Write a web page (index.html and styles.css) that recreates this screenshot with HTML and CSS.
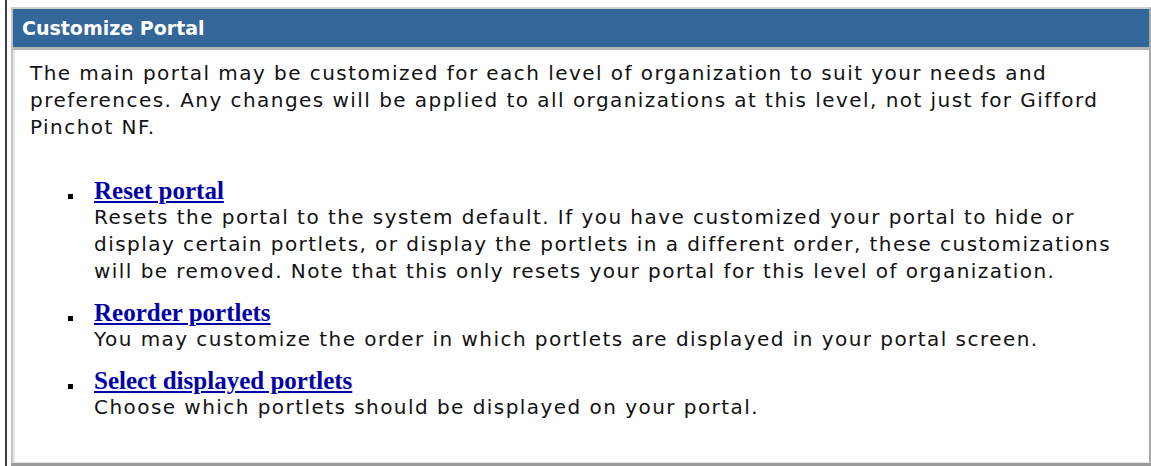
FILE: index.html
```html
<!DOCTYPE html>
<html lang="en">
<head>
<meta charset="utf-8">
<title>Customize Portal</title>
<link rel="stylesheet" href="styles.css">
</head>
<body>
<div class="frame">
  <section class="panel">
    <h1 class="panel-title">Customize Portal</h1>
    <div class="panel-body">
      <p class="intro">The main portal may be customized for each level of organization to suit your needs and preferences. Any changes will be applied to all organizations at this level, not just for Gifford Pinchot NF.</p>
      <ul class="options">
        <li class="option">
          <div class="option-text">
            <a href="#" class="option-link">Reset portal</a>
            <div class="option-desc">Resets the portal to the system default. If you have customized your portal to hide or display certain portlets, or display the portlets in a different order, these customizations will be removed. Note that this only resets your portal for this level of organization.</div>
          </div>
        </li>
        <li class="option">
          <div class="option-text">
            <a href="#" class="option-link">Reorder portlets</a>
            <div class="option-desc">You may customize the order in which portlets are displayed in your portal screen.</div>
          </div>
        </li>
        <li class="option">
          <div class="option-text">
            <a href="#" class="option-link">Select displayed portlets</a>
            <div class="option-desc">Choose which portlets should be displayed on your portal.</div>
          </div>
        </li>
      </ul>
    </div>
  </section>
</div>
</body>
</html>
```
FILE: styles.css
```css
html, body {
  margin: 0;
  padding: 0;
  background: #ffffff;
}

body {
  width: 1151px;
  height: 466px;
  overflow: hidden;
}

/* page frame: dark rule down the left edge */
.frame {
  margin-left: 5px;
  padding: 7px 0 0 4px;
  border-left: 2px solid #3c3c3c;
  height: 466px;
  box-sizing: border-box;
  display: flex;
  align-items: flex-start;
}

.panel {
  flex: 1;
  display: flex;
  flex-direction: column;
  border-top: 2px solid #cfcfcf;
  border-left: 2px solid #c4c4c4;
  border-right: 2px solid #a9a9a9;
  border-bottom: 1px solid #e2e2e2;
  background: #ffffff;
  height: 456px;
  box-sizing: border-box;
  box-shadow: 0 3px 0 #9a9a9a;
}

.panel-title {
  margin: 0;
  height: 38px;
  padding: 0 0 0 9px;
  background: #336699;
  border-bottom: 3px solid #b4b4b4;
  color: #ffffff;
  font-family: "DejaVu Sans", Verdana, sans-serif;
  font-weight: bold;
  font-size: 19px;
  line-height: 38px;
}

.panel-body {
  flex: 1;
  padding: 10px 8px 0 17px;
  font-family: "DejaVu Sans", Verdana, sans-serif;
  font-size: 20px;
  letter-spacing: 1.45px;
  line-height: 27px;
  color: #121212;
  box-shadow: inset 2px 0 0 #e6e6e6;
}

.intro {
  margin: 0 0 37px 0;
}

.options {
  list-style: none;
  margin: 0;
  padding: 0 0 0 38px;
}

.option {
  display: flex;
  margin-bottom: 15px;
}

/* small square bullet sitting on the link baseline */
.option::before {
  content: "";
  flex: none;
  width: 5px;
  height: 5px;
  margin: 16px 21px 0 0;
  background: #000000;
}

.option-text {
  flex: 1;
}

.option-link {
  display: block;
  width: max-content;
  font-family: "Liberation Serif", "Times New Roman", serif;
  font-weight: bold;
  font-size: 25px;
  letter-spacing: 0;
  line-height: 26px;
  color: #0000aa;
  text-decoration: underline;
}

.option-desc {
  line-height: 27px;
}
```
